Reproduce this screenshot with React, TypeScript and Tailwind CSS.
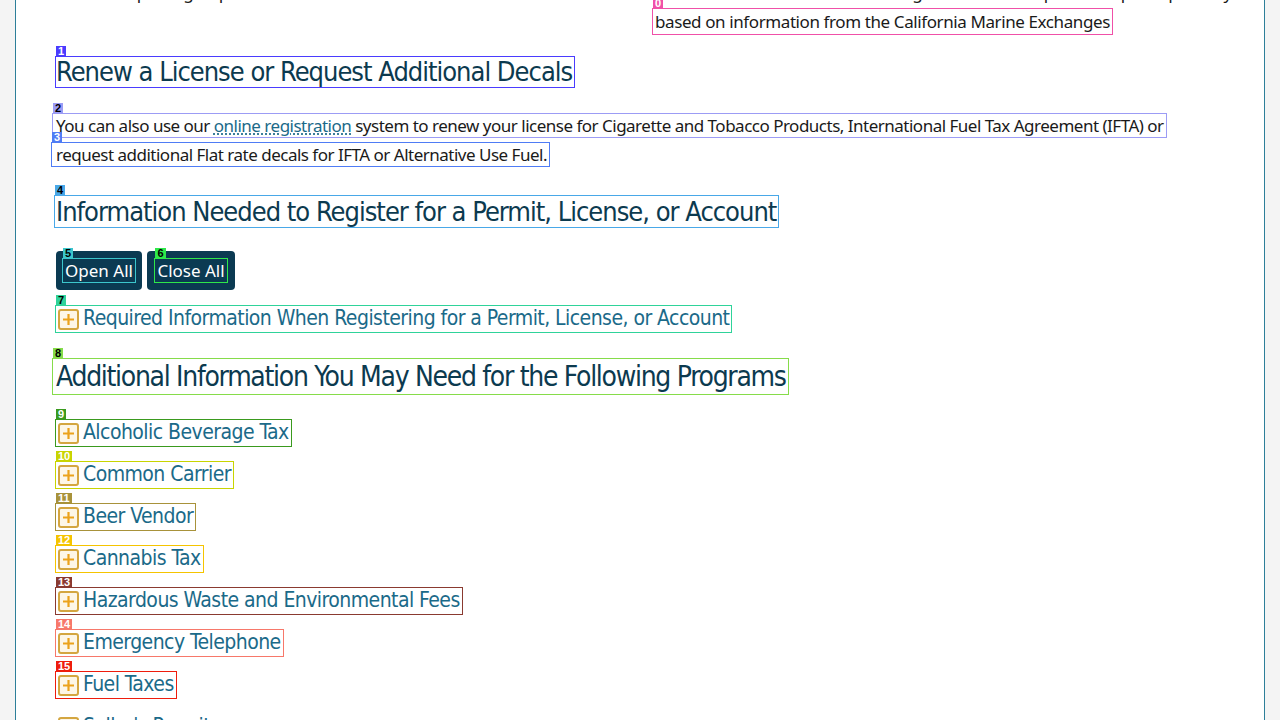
import React from "react";

const head = "font-['Liberation_Sans_Narrow','DejaVu_Sans_Condensed',sans-serif]";
const body = "font-['Noto_Sans','Liberation_Sans',sans-serif]";

const marks: Record<number, { line: string; tag: string }> = {
  0: { line: "outline-[#f050a8]", tag: "bg-[#f050a8] text-white" },
  1: { line: "outline-[#4a3cff]", tag: "bg-[#4a3cff] text-white" },
  2: { line: "outline-[#9c9cf5]", tag: "bg-[#9c9cf5] text-black" },
  3: { line: "outline-[#4f7cf5]", tag: "bg-[#4f7cf5] text-white" },
  4: { line: "outline-[#49a8e8]", tag: "bg-[#49a8e8] text-black" },
  5: { line: "outline-[#3cc6cc]", tag: "bg-[#3cc6cc] text-black" },
  6: { line: "outline-[#2ee84a]", tag: "bg-[#2ee84a] text-black" },
  7: { line: "outline-[#2fd39a]", tag: "bg-[#2fd39a] text-black" },
  8: { line: "outline-[#86dc4a]", tag: "bg-[#86dc4a] text-black" },
  9: { line: "outline-[#3a9a1e]", tag: "bg-[#3a9a1e] text-white" },
  10: { line: "outline-[#c8d400]", tag: "bg-[#c8d400] text-white" },
  11: { line: "outline-[#a8923a]", tag: "bg-[#a8923a] text-white" },
  12: { line: "outline-[#f5c400]", tag: "bg-[#f5c400] text-white" },
  13: { line: "outline-[#8a3a30]", tag: "bg-[#8a3a30] text-white" },
  14: { line: "outline-[#f7786a]", tag: "bg-[#f7786a] text-white" },
  15: { line: "outline-[#ee1c0c]", tag: "bg-[#ee1c0c] text-white" },
};

function Mark({ n, children, className = "" }: { n: number; children: React.ReactNode; className?: string }) {
  const m = marks[n];
  return (
    <span className={`relative inline-block outline-1 outline-solid ${m.line} ${className}`}>
      <span
        className={`absolute left-0 -top-[11px] h-[11px] px-[2px] text-[11px] leading-[11px] font-bold tracking-normal font-['Liberation_Sans',sans-serif] ${m.tag}`}
      >
        {n}
      </span>
      {children}
    </span>
  );
}

function PlusBox() {
  return (
    <svg width="21" height="21" viewBox="0 0 21 21" className="shrink-0">
      <rect x="1" y="1" width="19" height="19" rx="2" fill="#fdf6e6" stroke="#d4a640" strokeWidth="2" />
      <path d="M10.5 5v11M5 10.5h11" stroke="#eba21b" strokeWidth="2.2" />
    </svg>
  );
}

const itemText = `${head} text-[21px] text-[#1b6a89] tracking-[-0.55px]`;

function Item({ n, title }: { n: number; title: string }) {
  return (
    <Mark n={n} className="self-start">
      <span className={`flex items-center gap-[4px] px-[2px] h-[26px] ${itemText}`}>
        <PlusBox />
        {title}
      </span>
    </Mark>
  );
}

const programs = [
  "Alcoholic Beverage Tax",
  "Common Carrier",
  "Beer Vendor",
  "Cannabis Tax",
  "Hazardous Waste and Environmental Fees",
  "Emergency Telephone",
  "Fuel Taxes",
  "Seller's Permit",
];

export default function App() {
  return (
    <div className="h-screen overflow-hidden bg-[#f4f4f4]">
      <div className="mx-[15px] h-full overflow-hidden bg-white border-x border-[#2d7f99]">
        <div className={`-mt-[20px] pl-[40px] pr-[60px] text-[#1a1a1a] ${body}`}>
          {/* tail of the previous section */}
          <div className="grid grid-cols-[599px_1fr] text-[17px] leading-[25px] tracking-[-0.4px]">
            <div className="pl-[14px]">Vessel reporting requirements</div>
            <div>
              <div className="whitespace-nowrap mb-[3px]">Fee amounts are determined using vessel arrival reports compiled quarterly</div>
              <Mark n={0} className="px-[2px] -ml-[2px] mt-[1px]">based on information from the California Marine Exchanges</Mark>
            </div>
          </div>

          <h2 className={`mt-[23px] ${head} text-[#0c3a4f] text-[27px] leading-[30px] tracking-[-1px]`}>
            <Mark n={1} className="pr-[2px]">Renew a License or Request Additional Decals</Mark>
          </h2>

          <div className="mt-[27px] text-[17px] leading-[23px] tracking-[-0.5px]">
            <Mark n={2} className="-ml-[3px] pl-[3px] pr-[2px]">
              You can also use our{" "}
              <a href="#" className="text-[#1b6a89] underline decoration-dotted underline-offset-2">online registration</a>{" "}
              system to renew your license for Cigarette and Tobacco Products, International Fuel Tax Agreement (IFTA) or
            </Mark>
            <div className="mt-[6px]">
              <Mark n={3} className="-ml-[4px] pl-[4px] pr-[2px]">request additional Flat rate decals for IFTA or Alternative Use Fuel.</Mark>
            </div>
          </div>

          <h2 className={`mt-[30px] ${head} text-[#0c3a4f] text-[27px] leading-[31px] tracking-[-1px]`}>
            <Mark n={4} className="-ml-[1px] pl-[1px] pr-[2px]">Information Needed to Register for a Permit, License, or Account</Mark>
          </h2>

          <div className="mt-[24px] flex gap-[5px]">
            <button className="h-[39px] w-[86px] rounded-[4px] bg-[#0b3a52] text-white text-[17px] flex items-center justify-center">
              <Mark n={5} className="px-[2px] leading-[23px]">Open All</Mark>
            </button>
            <button className="h-[39px] w-[88px] rounded-[4px] bg-[#0b3a52] text-white text-[17px] flex items-center justify-center">
              <Mark n={6} className="px-[2px] leading-[23px]">Close All</Mark>
            </button>
          </div>

          <div className="mt-[16px] flex">
            <Item n={7} title="Required Information When Registering for a Permit, License, or Account" />
          </div>

          <h2 className={`mt-[27px] ${head} text-[#0c3a4f] text-[28px] leading-[35px] tracking-[-1.3px]`}>
            <Mark n={8} className="-ml-[3px] pl-[3px] pr-[2px]">Additional Information You May Need for the Following Programs</Mark>
          </h2>

          <div className="mt-[26px] flex flex-col gap-[16px]">
            {programs.map((p, i) =>
              i < 7 ? (
                <Item key={p} n={9 + i} title={p} />
              ) : (
                <span key={p} className={`flex items-center gap-[4px] px-[2px] h-[26px] ${itemText}`}>
                  <PlusBox />
                  {p}
                </span>
              )
            )}
          </div>
        </div>
      </div>
    </div>
  );
}
